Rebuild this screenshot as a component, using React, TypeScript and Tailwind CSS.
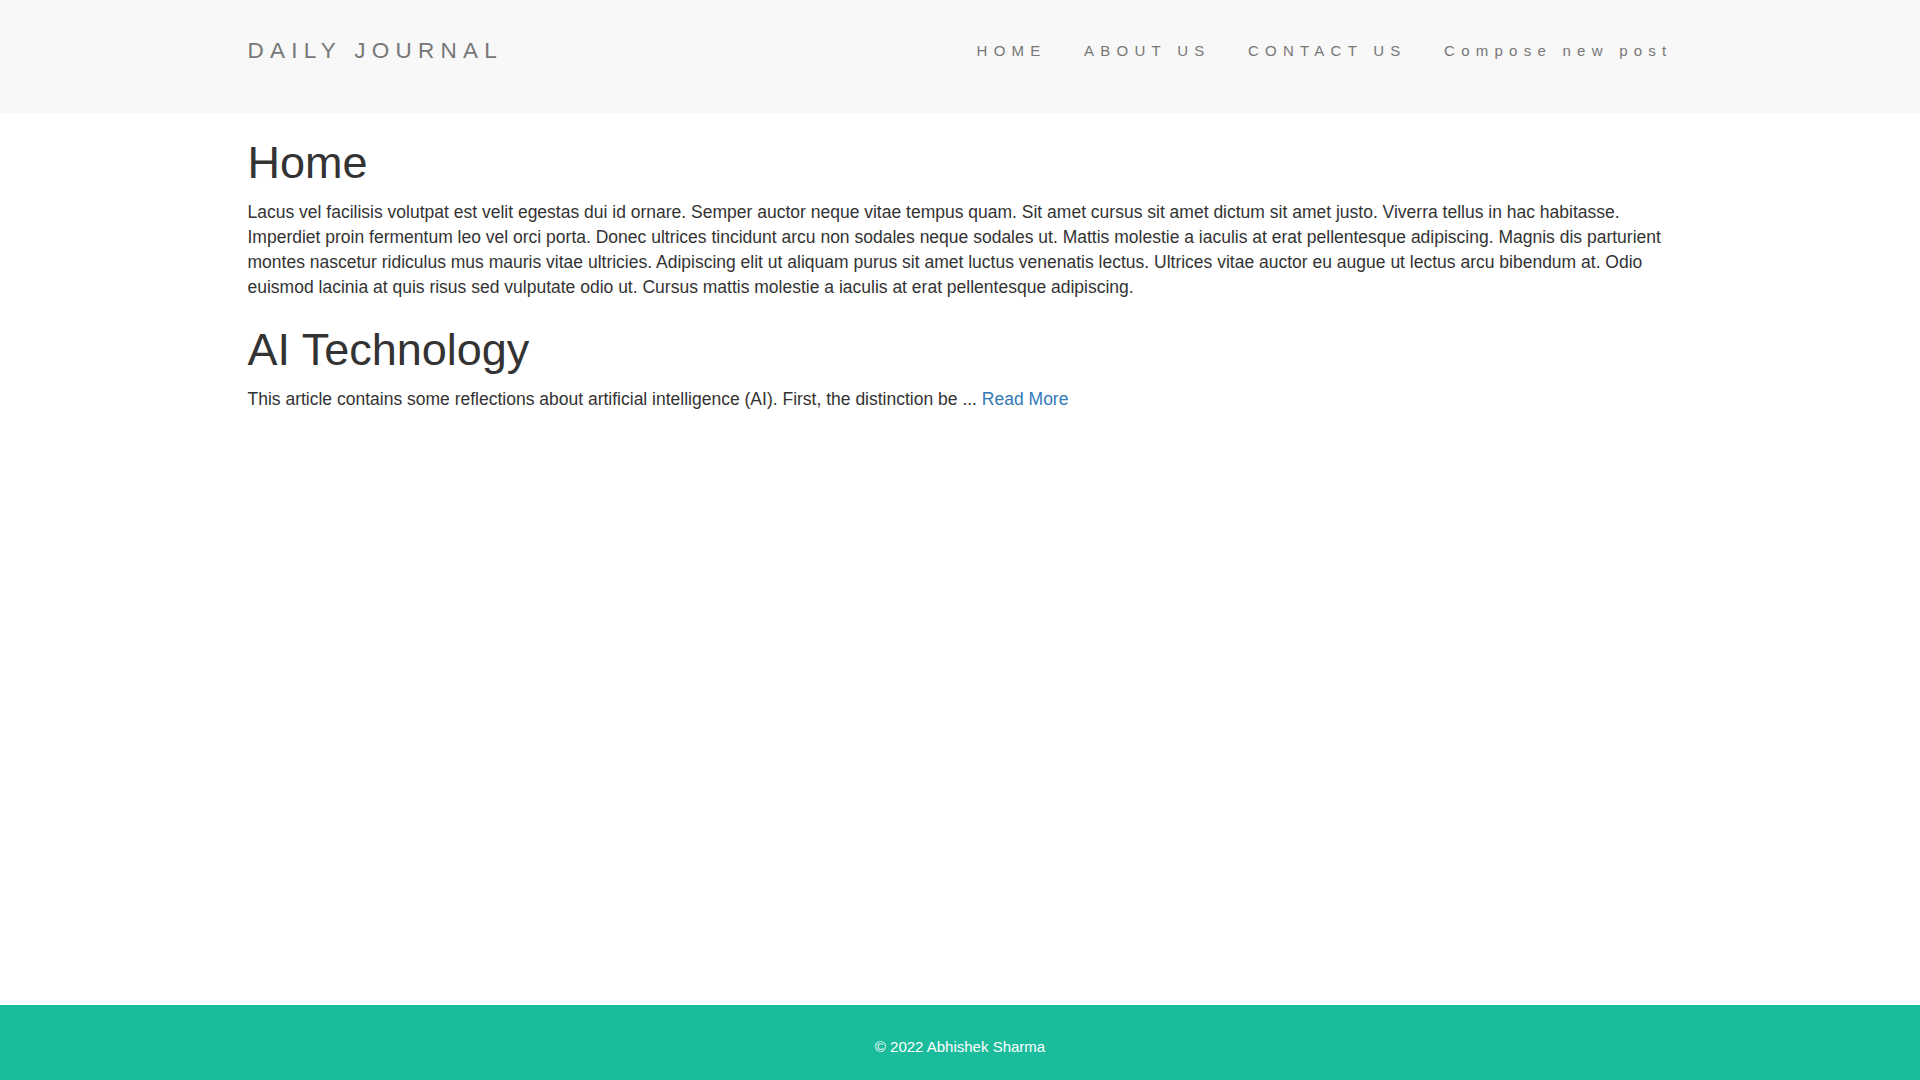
const body =
  "Lacus vel facilisis volutpat est velit egestas dui id ornare. Semper auctor neque vitae tempus quam. Sit amet cursus sit amet dictum sit amet justo. Viverra tellus in hac habitasse. Imperdiet proin fermentum leo vel orci porta. Donec ultrices tincidunt arcu non sodales neque sodales ut. Mattis molestie a iaculis at erat pellentesque adipiscing. Magnis dis parturient montes nascetur ridiculus mus mauris vitae ultricies. Adipiscing elit ut aliquam purus sit amet luctus venenatis lectus. Ultrices vitae auctor eu augue ut lectus arcu bibendum at. Odio euismod lacinia at quis risus sed vulputate odio ut. Cursus mattis molestie a iaculis at erat pellentesque adipiscing.";

const links = ["HOME", "ABOUT US", "CONTACT US", "Compose new post"];

export default function App() {
  return (
    <div className="min-h-screen flex flex-col bg-white text-[#333] font-['Liberation_Sans',Arial,sans-serif] text-[17.5px] leading-[25px]">
      {/* Navbar */}
      <nav className="bg-[#f8f8f8] py-[18.75px] text-[15px] tracking-[6.25px] text-[#777]">
        <div className="max-w-[1462.5px] mx-auto px-[18.75px] flex justify-between items-start">
          <p className="py-[18.75px] mb-[12.5px] text-[22.5px] leading-[25px]">DAILY JOURNAL</p>
          <ul className="flex -mr-[18.75px]">
            {links.map((l) => (
              <li key={l}>
                <a href="#" className="block p-[18.75px] leading-[25px] text-[#777]">
                  {l}
                </a>
              </li>
            ))}
          </ul>
        </div>
      </nav>

      {/* Posts */}
      <main className="flex-1">
        <div className="max-w-[1462.5px] mx-auto px-[18.75px]">
          <h1 className="mt-[25px] mb-[12.5px] text-[45px] leading-[49.5px] font-normal">Home</h1>
          <p className="mb-[12.5px]">{body}</p>
          <h1 className="mt-[25px] mb-[12.5px] text-[45px] leading-[49.5px] font-normal">AI Technology</h1>
          <p className="mb-[12.5px]">
            This article contains some reflections about artificial intelligence (AI). First, the distinction be ...{" "}
            <a href="#" className="text-[#337ab7]">Read More</a>
          </p>
        </div>
      </main>

      {/* Footer */}
      <footer className="h-[75px] bg-[#1abc9c] text-center">
        <p className="mt-[31.25px] text-[15px] leading-[21.4px] text-white">© 2022 Abhishek Sharma</p>
      </footer>
    </div>
  );
}
